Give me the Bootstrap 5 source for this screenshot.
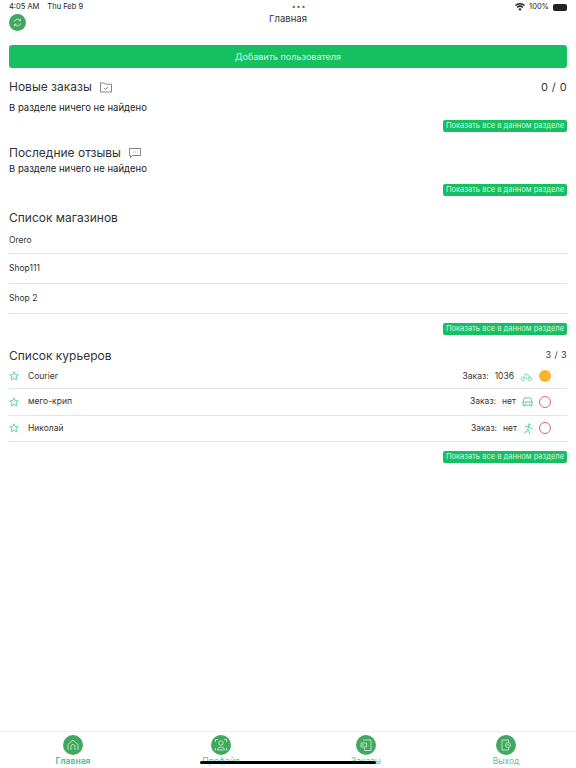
<!DOCTYPE html>
<html lang="ru">
<head>
    <meta charset="UTF-8">
    <meta name="viewport" content="width=device-width, initial-scale=1.0">
    <link href="https://cdn.jsdelivr.net/npm/bootstrap@5.3.3/dist/css/bootstrap.min.css" rel="stylesheet">
    <script src="https://cdn.jsdelivr.net/npm/bootstrap@5.3.3/dist/js/bootstrap.bundle.min.js"></script>
    <title>Главная</title>
    <style>
        body {
            font-family: Inter, "Liberation Sans", sans-serif;
            color: #333;
            background: #fff;
            height: 768px;
            overflow: hidden;
        }
        .status-bar {
            height: 14px;
            padding: 2px 9px 0;
            font-size: 7.5px;
            line-height: 10px;
            color: #222;
        }
        .status-dots {
            font-size: 7px;
            letter-spacing: 1px;
            color: #666;
        }
        .battery {
            width: 14px;
            height: 7px;
            background: #222;
            border-radius: 2px;
        }
        .top-bar {
            height: 31px;
            padding: 0 9px;
        }
        .top-title {
            font-size: 9.5px;
            line-height: 12px;
            margin-top: -1px;
        }
        .round-icon {
            width: 17px;
            height: 17px;
            border-radius: 50%;
            background: #43a85f;
        }
        .page-body {
            padding: 0 9px;
        }
        .add-btn {
            height: 23px;
            padding: 0;
            background: #16c060;
            border: 0;
            border-radius: 3px;
            color: #d8f5e3;
            font-size: 9px;
            line-height: 23px;
        }
        .section-title {
            font-size: 12px;
            line-height: 16px;
            font-weight: 400;
            color: #333;
            margin: 0;
        }
        .counter {
            font-size: 11px;
            line-height: 14px;
            letter-spacing: 0.4px;
        }
        .counter-small {
            font-size: 9px;
        }
        .empty-text {
            font-size: 9.5px;
            line-height: 12px;
            color: #222;
        }
        .show-all {
            width: 124px;
            height: 12px;
            padding: 0;
            background: #16c060;
            border: 0;
            border-radius: 2px;
            color: #d8f5e3;
            font-size: 7.5px;
            line-height: 12px;
        }
        .shop-row {
            height: 30px;
            border-bottom: 1px solid #e4e4e4;
            font-size: 8.5px;
            line-height: 10px;
            padding-bottom: 1px;
        }
        .courier-row {
            height: 26.5px;
            border-bottom: 1px solid #e4e4e4;
            font-size: 8.5px;
            padding-right: 16px;
        }
        .courier-name {
            margin-left: 9px;
        }
        .order-label {
            margin-right: 6px;
        }
        .order-value {
            margin-right: 6px;
        }
        .state-dot {
            width: 12px;
            height: 12px;
            border-radius: 50%;
            margin-left: 6px;
        }
        .state-busy {
            background: #f6b52c;
        }
        .state-free {
            border: 1px solid #d9606e;
        }
        .tab-bar {
            position: relative;
            height: 37px;
            border-top: 1px solid #eee;
            display: grid;
            grid-template-columns: 146px 150px 140px 140px;
        }
        .tab-item {
            padding-top: 3px;
            font-size: 8.5px;
            line-height: 10px;
            color: #5fc39a;
            overflow: hidden;
        }
        .tab-icon {
            width: 20px;
            height: 20px;
            border-radius: 50%;
            background: #43a85f;
            margin-bottom: 1px;
        }
        .home-line {
            position: absolute;
            left: 200px;
            top: 29px;
            width: 176px;
            height: 3px;
            border-radius: 2px;
            background: #000;
        }
    </style>
</head>
<body class="d-flex flex-column">
    <div class="status-bar d-flex justify-content-between align-items-start">
        <div class="d-flex gap-2"><span>4:05 AM</span><span>Thu Feb 9</span></div>
        <div class="status-dots">•••</div>
        <div class="d-flex align-items-center gap-1">
            <svg width="10" height="8" viewBox="0 0 10 8"><path d="M5 8 3.4 6a2.4 2.4 0 0 1 3.2 0zM2.6 5 1.6 3.8a5.2 5.2 0 0 1 6.8 0L7.4 5a3.7 3.7 0 0 0-4.8 0zM.9 3 0 1.9a7.6 7.6 0 0 1 10 0L9.1 3A6.2 6.2 0 0 0 .9 3z" fill="#222"/></svg>
            <span>100%</span>
            <span class="battery"></span>
        </div>
    </div>

    <div class="top-bar d-flex align-items-start position-relative">
        <div class="round-icon d-flex align-items-center justify-content-center">
            <svg width="11" height="11" viewBox="0 0 12 12" fill="none" stroke="#c9eed5" stroke-width="1"><path d="M2.5 5a3.6 3.6 0 0 1 6.4-1.2M9.5 7a3.6 3.6 0 0 1-6.4 1.2"/><path d="M9.4 1.8v2.3H7.1M2.6 10.2V7.9h2.3"/></svg>
        </div>
        <div class="top-title flex-grow-1 text-center">Главная</div>
        <div style="width:17px"></div>
    </div>

    <main class="page-body flex-grow-1">
        <button class="add-btn btn w-100 d-block">Добавить пользователя</button>

        <div class="d-flex justify-content-between align-items-center" style="margin-top:11px">
            <h2 class="section-title d-flex align-items-center">Новые заказы
                <svg class="ms-2" width="12" height="11" viewBox="0 0 12 11" fill="none" stroke="#555" stroke-width=".7"><path d="M.5 10V1h4l1 1.2h6V10z"/><path d="M4 6l1.5 1.5L8 4.8"/></svg>
            </h2>
            <div class="counter">0 / 0</div>
        </div>
        <div class="empty-text" style="margin-top:7px">В разделе ничего не найдено</div>
        <div class="d-flex justify-content-end" style="margin-top:6px">
            <button class="show-all btn">Показать все в данном разделе</button>
        </div>

        <div style="margin-top:13px">
            <h2 class="section-title d-flex align-items-center">Последние отзывы
                <svg class="ms-2" width="12" height="10" viewBox="0 0 12 10" fill="none" stroke="#555" stroke-width=".7"><path d="M.5.5h11v7H3.5L1.5 9.5v-2h-1z"/><path d="M4 4h.6M6 4h.6M8 4h.6"/></svg>
            </h2>
        </div>
        <div class="empty-text" style="margin-top:2px">В разделе ничего не найдено</div>
        <div class="d-flex justify-content-end" style="margin-top:9px">
            <button class="show-all btn">Показать все в данном разделе</button>
        </div>

        <h2 class="section-title" style="margin-top:14px">Список магазинов</h2>
        <div class="shop-row d-flex align-items-center" style="height:27px;margin-top:1px">Orero</div>
        <div class="shop-row d-flex align-items-center">Shop111</div>
        <div class="shop-row d-flex align-items-center">Shop 2</div>
        <div class="d-flex justify-content-end" style="margin-top:9px">
            <button class="show-all btn">Показать все в данном разделе</button>
        </div>

        <div class="d-flex justify-content-between align-items-start" style="margin-top:13px">
            <h2 class="section-title">Список курьеров</h2>
            <div class="counter counter-small">3 / 3</div>
        </div>
        <div class="courier-row d-flex align-items-center" style="height:25px">
            <svg width="10" height="10" viewBox="0 0 12 12" fill="none" stroke="#45c79a" stroke-width="1"><path d="M6 1l1.5 3.3 3.6.4-2.7 2.4.8 3.6L6 8.9l-3.2 1.8.8-3.6L.9 4.7l3.6-.4z"/></svg>
            <span class="courier-name">Courier</span>
            <span class="order-label ms-auto">Заказ:</span>
            <span class="order-value">1036</span>
            <svg width="13" height="9" viewBox="0 0 14 10" fill="none" stroke="#7fd6b8" stroke-width="1"><circle cx="3" cy="7.5" r="2"/><circle cx="11" cy="7.5" r="2"/><path d="M3 7.5 6 3h3l2 4.5M5 2h2M6 7h3"/></svg>
            <span class="state-dot state-busy"></span>
        </div>
        <div class="courier-row d-flex align-items-center">
            <svg width="10" height="10" viewBox="0 0 12 12" fill="none" stroke="#45c79a" stroke-width="1"><path d="M6 1l1.5 3.3 3.6.4-2.7 2.4.8 3.6L6 8.9l-3.2 1.8.8-3.6L.9 4.7l3.6-.4z"/></svg>
            <span class="courier-name">мего-крип</span>
            <span class="order-label ms-auto">Заказ:</span>
            <span class="order-value">нет</span>
            <svg width="11" height="10" viewBox="0 0 12 11" fill="none" stroke="#52c29b" stroke-width="1"><path d="M1 5.5 2.5 1h7L11 5.500V9H1z"/><path d="M1 5.500h10M2.500 9v1.500M9.500 9v1.500M3 7.300h1M8 7.300h1"/></svg>
            <span class="state-dot state-free"></span>
        </div>
        <div class="courier-row d-flex align-items-center">
            <svg width="10" height="10" viewBox="0 0 12 12" fill="none" stroke="#45c79a" stroke-width="1"><path d="M6 1l1.5 3.3 3.6.4-2.7 2.4.8 3.6L6 8.9l-3.2 1.8.8-3.6L.9 4.7l3.600-.4z"/></svg>
            <span class="courier-name">Николай</span>
            <span class="order-label ms-auto">Заказ:</span>
            <span class="order-value">нет</span>
            <svg width="10" height="11" viewBox="0 0 11 12" fill="none" stroke="#52c29b" stroke-width="1"><circle cx="7" cy="1.800" r="1"/><path d="M2 4.500 4.500 3.500 7 4l2 2h1.500M6.500 4 5 7.500l2 1.500.5 3M5 7.500 3.500 10H1"/></svg>
            <span class="state-dot state-free"></span>
        </div>
        <div class="d-flex justify-content-end" style="margin-top:9px">
            <button class="show-all btn">Показать все в данном разделе</button>
        </div>
    </main>

    <nav class="tab-bar">
        <div class="tab-item d-flex flex-column align-items-center fw-bold">
            <span class="tab-icon d-flex align-items-center justify-content-center">
                <svg width="14" height="14" viewBox="0 0 14 14" fill="none" stroke="#bfe8cc" stroke-width=".9"><path d="M2 12V6.500L7 2l5 4.500V12"/><path d="M5 12V8.500a2 2 0 0 1 4 0V12"/></svg>
            </span>
            Главная
        </div>
        <div class="tab-item d-flex flex-column align-items-center">
            <span class="tab-icon d-flex align-items-center justify-content-center">
                <svg width="14" height="14" viewBox="0 0 14 14" fill="none" stroke="#bfe8cc" stroke-width=".9"><circle cx="7" cy="5" r="2.200"/><path d="M3.500 12a3.500 3 0 0 1 7 0zM1.500 4V1.500H4M10 1.500h2.500V4M1.500 10v2.500M12.500 10v2.500"/></svg>
            </span>
            Профайл
        </div>
        <div class="tab-item d-flex flex-column align-items-center">
            <span class="tab-icon d-flex align-items-center justify-content-center">
                <svg width="14" height="14" viewBox="0 0 14 14" fill="none" stroke="#bfe8cc" stroke-width=".9"><path d="M4 2h8v10.500H5"/><path d="M2 5h5.500v4H2zM3 7h2M5.500 9.500v2"/></svg>
            </span>
            Заказы
        </div>
        <div class="tab-item d-flex flex-column align-items-center">
            <span class="tab-icon d-flex align-items-center justify-content-center">
                <svg width="14" height="14" viewBox="0 0 14 14" fill="none" stroke="#bfe8cc" stroke-width=".9"><path d="M9.500 4V2H3v10h6.500v-2"/><circle cx="9" cy="7" r="2.500"/><path d="M7.500 7h3"/></svg>
            </span>
            Выход
        </div>
        <div class="home-line"></div>
    </nav>
</body>
</html>
